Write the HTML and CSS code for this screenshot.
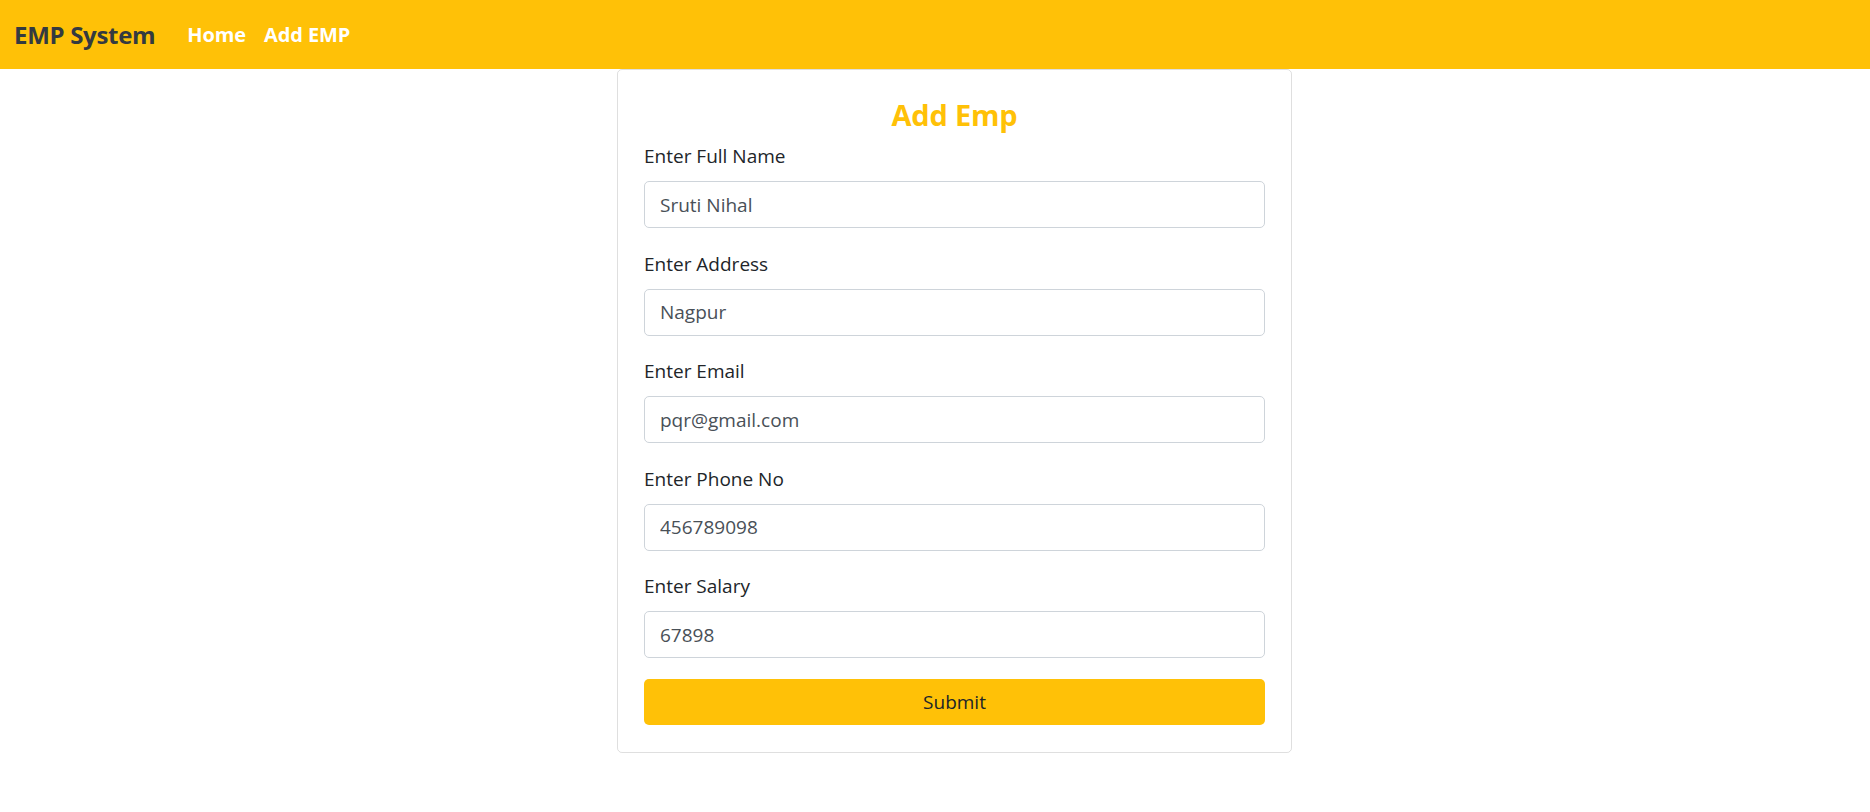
FILE: index.html
```html
<!DOCTYPE html>
<html lang="en">
<head>
<meta charset="utf-8">
<title>EMP System</title>
<link rel="stylesheet" href="styles.css">
</head>
<body>
<nav class="navbar">
  <a class="brand" href="#">EMP System</a>
  <a class="nav-link" href="#">Home</a>
  <a class="nav-link" href="#">Add EMP</a>
</nav>
<main class="main">
  <div class="card">
    <h4 class="title">Add Emp</h4>
    <form class="form">
      <div class="group">
        <label class="label">Enter Full Name</label>
        <input class="control" type="text" value="Sruti Nihal">
      </div>
      <div class="group">
        <label class="label">Enter Address</label>
        <input class="control" type="text" value="Nagpur">
      </div>
      <div class="group">
        <label class="label">Enter Email</label>
        <input class="control" type="text" value="pqr@gmail.com">
      </div>
      <div class="group">
        <label class="label">Enter Phone No</label>
        <input class="control" type="text" value="456789098">
      </div>
      <div class="group last">
        <label class="label">Enter Salary</label>
        <input class="control" type="text" value="67898">
      </div>
      <button class="submit" type="button">Submit</button>
    </form>
  </div>
</main>
</body>
</html>
```
FILE: styles.css
```css
* { box-sizing: border-box; }
body {
  margin: 0;
  font-family: "Open Sans", "Noto Sans", sans-serif;
  color: #212529;
  background: #fff;
}
.navbar {
  height: 69px;
  background: #ffc107;
  display: flex;
  align-items: center;
  padding: 0 14px;
}
.brand {
  font-size: 24px;
  font-weight: 700;
  color: #343a40;
  text-decoration: none;
  margin-right: 23px;
  letter-spacing: -0.3px;
}
.nav-link {
  font-size: 20px;
  font-weight: 700;
  color: #fff;
  text-decoration: none;
  padding: 0 9px;
  letter-spacing: -0.1px;
}
.main {
  display: flex;
  padding-left: 617px;
}
.card {
  width: 675px;
  border: 1px solid rgba(0,0,0,.125);
  border-radius: 5px;
  padding: 28px 26px 27px;
}
.title {
  margin: 0 0 10px;
  text-align: center;
  color: #ffc107;
  font-size: 29px;
  font-weight: 700;
  line-height: 34px;
  letter-spacing: -0.2px;
}
.form { display: flex; flex-direction: column; }
.group { display: flex; flex-direction: column; margin-bottom: 21.6px; }
.group.last { margin-bottom: 21px; }
.label {
  font-size: 19px;
  line-height: 29px;
  margin-bottom: 10px;
}
.control {
  height: 47px;
  border: 1px solid #ced4da;
  border-radius: 5px;
  padding: 0 15px;
  font-family: inherit;
  font-size: 19px;
  color: #495057;
  background: #fff;
}
.submit {
  height: 46px;
  border: 0;
  border-radius: 5px;
  background: #ffc107;
  color: #212529;
  font-family: inherit;
  font-size: 19px;
}
```
